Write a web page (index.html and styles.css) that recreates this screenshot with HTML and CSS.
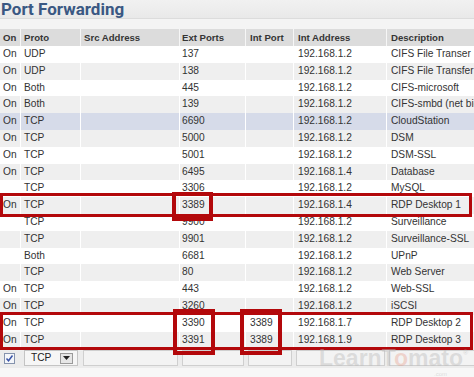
FILE: index.html
```html
<!DOCTYPE html>
<html>
<head>
<meta charset="utf-8">
<link rel="stylesheet" href="styles.css">
</head>
<body>
<div class="page">
  <div class="title-bar"><h1 class="title">Port Forwarding</h1></div>
  <div class="spacer"></div>
  <div class="grid">
    <div class="row head"><div class="c">On</div><div class="c">Proto</div><div class="c">Src Address</div><div class="c">Ext Ports</div><div class="c">Int Port</div><div class="c">Int Address</div><div class="c">Description</div></div>
    <div class="row"><div class="c">On</div><div class="c">UDP</div><div class="c"></div><div class="c">137</div><div class="c"></div><div class="c">192.168.1.2</div><div class="c">CIFS File Transer</div></div>
    <div class="row alt"><div class="c">On</div><div class="c">UDP</div><div class="c"></div><div class="c">138</div><div class="c"></div><div class="c">192.168.1.2</div><div class="c">CIFS File Transfer</div></div>
    <div class="row"><div class="c">On</div><div class="c">Both</div><div class="c"></div><div class="c">445</div><div class="c"></div><div class="c">192.168.1.2</div><div class="c">CIFS-microsoft</div></div>
    <div class="row alt"><div class="c">On</div><div class="c">Both</div><div class="c"></div><div class="c">139</div><div class="c"></div><div class="c">192.168.1.2</div><div class="c">CIFS-smbd (net bios)</div></div>
    <div class="row hl"><div class="c">On</div><div class="c">TCP</div><div class="c"></div><div class="c">6690</div><div class="c"></div><div class="c">192.168.1.2</div><div class="c">CloudStation</div></div>
    <div class="row alt"><div class="c">On</div><div class="c">TCP</div><div class="c"></div><div class="c">5000</div><div class="c"></div><div class="c">192.168.1.2</div><div class="c">DSM</div></div>
    <div class="row"><div class="c">On</div><div class="c">TCP</div><div class="c"></div><div class="c">5001</div><div class="c"></div><div class="c">192.168.1.2</div><div class="c">DSM-SSL</div></div>
    <div class="row alt"><div class="c">On</div><div class="c">TCP</div><div class="c"></div><div class="c">6495</div><div class="c"></div><div class="c">192.168.1.4</div><div class="c">Database</div></div>
    <div class="row"><div class="c"></div><div class="c">TCP</div><div class="c"></div><div class="c">3306</div><div class="c"></div><div class="c">192.168.1.2</div><div class="c">MySQL</div></div>
    <div class="row alt"><div class="c">On</div><div class="c">TCP</div><div class="c"></div><div class="c">3389</div><div class="c"></div><div class="c">192.168.1.4</div><div class="c">RDP Desktop 1</div></div>
    <div class="row"><div class="c"></div><div class="c">TCP</div><div class="c"></div><div class="c">9900</div><div class="c"></div><div class="c">192.168.1.2</div><div class="c">Surveillance</div></div>
    <div class="row alt"><div class="c"></div><div class="c">TCP</div><div class="c"></div><div class="c">9901</div><div class="c"></div><div class="c">192.168.1.2</div><div class="c">Surveillance-SSL</div></div>
    <div class="row"><div class="c"></div><div class="c">Both</div><div class="c"></div><div class="c">6681</div><div class="c"></div><div class="c">192.168.1.2</div><div class="c">UPnP</div></div>
    <div class="row alt"><div class="c"></div><div class="c">TCP</div><div class="c"></div><div class="c">80</div><div class="c"></div><div class="c">192.168.1.2</div><div class="c">Web Server</div></div>
    <div class="row"><div class="c">On</div><div class="c">TCP</div><div class="c"></div><div class="c">443</div><div class="c"></div><div class="c">192.168.1.2</div><div class="c">Web-SSL</div></div>
    <div class="row alt"><div class="c">On</div><div class="c">TCP</div><div class="c"></div><div class="c">3260</div><div class="c"></div><div class="c">192.168.1.2</div><div class="c">iSCSI</div></div>
    <div class="row"><div class="c">On</div><div class="c">TCP</div><div class="c"></div><div class="c">3390</div><div class="c">3389</div><div class="c">192.168.1.7</div><div class="c">RDP Desktop 2</div></div>
    <div class="row alt"><div class="c">On</div><div class="c">TCP</div><div class="c"></div><div class="c">3391</div><div class="c">3389</div><div class="c">192.168.1.9</div><div class="c">RDP Desktop 3</div></div>
    <div class="row edit">
      <div class="c"><span class="check"><svg width="11" height="11" viewBox="0 0 11 11"><rect x="0.5" y="0.5" width="10" height="10" fill="#f4f6fa" stroke="#8593ad"/><path d="M2.5 5.5 L4.5 7.8 L8.5 2.5" fill="none" stroke="#3a55a8" stroke-width="1.5"/></svg></span></div>
      <div class="c"><span class="select"><span class="sel-text">TCP</span><span class="sel-btn"><svg width="7" height="4" viewBox="0 0 7 4"><path d="M0 0 H7 L3.5 4 Z" fill="#222"/></svg></span></span></div>
      <div class="c"><span class="field"></span></div>
      <div class="c"><span class="field"></span></div>
      <div class="c"><span class="field"></span></div>
      <div class="c"><span class="field"></span></div>
      <div class="c"><span class="field"></span></div>
    </div>
  </div>
  <div class="bottom"></div>

  <div class="mark box-row1"></div>
  <div class="mark box-ext1"></div>
  <div class="mark box-rows2"></div>
  <div class="mark box-ext2"></div>
  <div class="mark box-int2"></div>

  <div class="watermark">Learn<span class="wm-t">T</span><span class="wm-o">o</span>mato<span class="wm-r">®</span></div>
  <div class="wm-com">.com</div>
</div>
</body>
</html>
```

FILE: styles.css
```css
html, body {
  margin: 0;
  padding: 0;
  background: #ffffff;
}
.page {
  position: relative;
  width: 474px;
  height: 377px;
  overflow: hidden;
  font-family: "Liberation Sans", Arial, sans-serif;
  color: #333;
}
.title-bar {
  height: 19px;
  background: linear-gradient(#f1f1f1, #e9e9e9);
  border-bottom: 1px solid #dcdcdc;
  box-sizing: border-box;
}
.title {
  margin: 0;
  padding-left: 1px;
  font-family: Roboto, "Liberation Sans", sans-serif;
  font-weight: 700;
  font-size: 17px;
  line-height: 18px;
  height: 18px;
  color: #3a5883;
}
.spacer {
  height: 10px;
  background: #f4f4f4;
}
.grid {
  width: 520px;
}
.row {
  display: grid;
  grid-template-columns: 21px 60px 99px 66px 48px 93px 133px;
  height: 16.8px;
  background: #ffffff;
  font-size: 10.2px;
  line-height: 16.8px;
}
.row.alt { background: #efefef; }
.row.hl { background: #d6dbe9; }
.row.head {
  height: 17px;
  line-height: 17px;
  background: #dcdcdc;
  font-weight: 700;
  font-size: 9.6px;
  color: #353535;
}
.c {
  box-sizing: border-box;
  border-right: 1px solid #ffffff;
  padding-left: 3px;
  white-space: nowrap;
  overflow: hidden;
}
.row .c:nth-child(4) { padding-left: 2px; }
.row .c:nth-child(5),
.row .c:nth-child(6),
.row .c:nth-child(7) { padding-left: 4px; }
.row.head .c { border-right-color: #f6f6f6; }

.row.edit {
  height: 20px;
  background: #ececec;
  display: grid;
  align-items: center;
}
.row.edit .c {
  height: 20px;
  display: flex;
  align-items: center;
  padding: 0 2px;
  border-right: none;
}
.check { display: block; width: 11px; height: 11px; margin-left: 2px; }
.check svg { display: block; }
.select {
  display: flex;
  align-items: center;
  width: 54px;
  height: 16px;
  box-sizing: border-box;
  border: 1px solid #c4c4c4;
  background: #f6f6f6;
  margin-left: 1px;
}
.sel-text {
  flex: 1;
  padding-left: 6px;
  font-size: 10.2px;
  color: #222;
}
.sel-btn {
  width: 13px;
  height: 11px;
  box-sizing: border-box;
  border: 1px solid #9a9a9a;
  background: #e6e6e6;
  display: flex;
  align-items: center;
  justify-content: center;
  margin-right: 4px;
}
.sel-btn svg { display: block; }
.field {
  display: block;
  width: 100%;
  height: 16px;
  box-sizing: border-box;
  border: 1px solid #cfcfcf;
  background: #f3f3f3;
}
.bottom {
  height: 10px;
  background: #f7f7f7;
}

.mark {
  position: absolute;
  box-sizing: border-box;
  border-style: solid;
  border-color: #b3080b;
}
.box-row1 { left: 0; top: 193px; width: 472px; height: 24px; border-width: 3px; }
.box-ext1 { left: 172px; top: 192px; width: 41px; height: 29px; border-width: 4px; }
.box-rows2 { left: 0; top: 312px; width: 473px; height: 38px; border-width: 3px; }
.box-ext2 { left: 173px; top: 309px; width: 42px; height: 46px; border-width: 4px; }
.box-int2 { left: 240px; top: 309px; width: 42px; height: 46px; border-width: 4px; }

.watermark {
  position: absolute;
  left: 319px;
  top: 349px;
  font-family: "Liberation Sans", Arial, sans-serif;
  font-weight: 700;
  font-size: 23px;
  line-height: 18px;
  color: rgba(190, 190, 190, 0.45);
  white-space: nowrap;
}
.wm-o { color: rgba(230, 150, 130, 0.35); }
.wm-r { font-size: 7px; vertical-align: top; line-height: 7px; }
.wm-com {
  position: absolute;
  left: 434px;
  top: 371px;
  font-family: "Liberation Sans", Arial, sans-serif;
  font-size: 6px;
  line-height: 6px;
  color: rgba(190, 190, 190, 0.5);
}
```
